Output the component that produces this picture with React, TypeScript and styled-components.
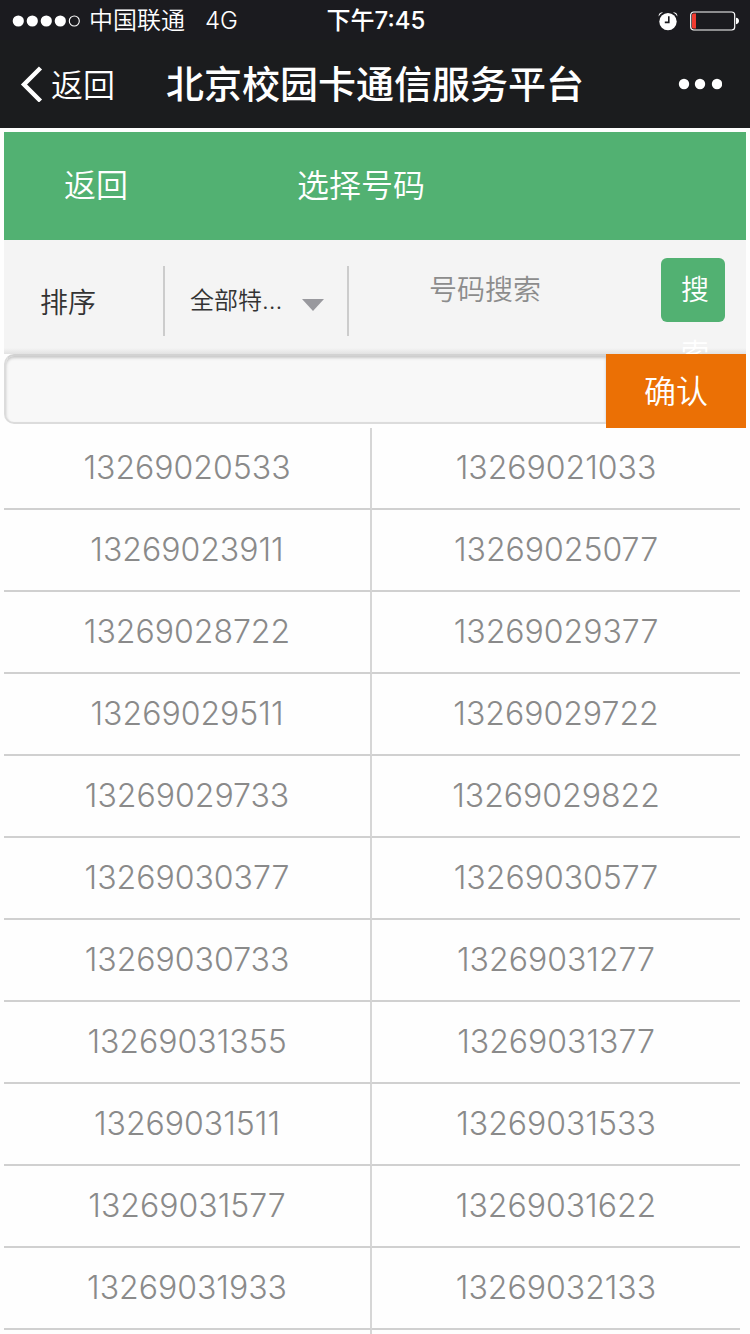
import React from "react";
import styled, { createGlobalStyle } from "styled-components";

const GlobalStyle = createGlobalStyle`
  * { box-sizing: border-box; }
  body {
    margin: 0;
    background: #fefefe;
    font-family: Inter, "Noto Sans CJK SC", sans-serif;
    font-weight: 350;
  }
  button, input, select { font: inherit; border: 0; margin: 0; padding: 0; }
`;

const Screen = styled.div`
  display: flex;
  flex-direction: column;
  min-height: 100vh;
`;

const StatusBar = styled.div`
  display: grid;
  grid-template-columns: 1fr auto 1fr;
  align-items: center;
  height: 40px;
  padding: 2px 10px 0 12px;
  background: #1b1b1f;
  color: #fff;
  font-size: 24px;
  line-height: 38px;
`;

const StatusGroup = styled.div<{ $end?: boolean }>`
  display: flex;
  align-items: center;
  justify-content: ${(p) => (p.$end ? "flex-end" : "flex-start")};
  gap: ${(p) => (p.$end ? "12px" : "8px")};
`;

const Network = styled.span`
  margin-left: 12px;
`;

const Clock = styled.time`
  font-weight: 500;
`;

const NavBar = styled.header`
  display: flex;
  align-items: center;
  height: 88px;
  padding: 0 28px 0 20px;
  background: #1b1c1e;
  color: #fff;
`;

const NavBack = styled.button`
  display: flex;
  align-items: center;
  gap: 8px;
  width: 146px;
  background: none;
  color: #fff;
  font-size: 32px;
  line-height: 48px;
`;

const NavLabel = styled.span`
  padding-top: 4px;
`;

const NavTitle = styled.h1`
  flex: 1;
  margin: 0;
  font-size: 38px;
  font-weight: 500;
  line-height: 56px;
  white-space: nowrap;
`;

const MoreButton = styled.button`
  display: flex;
  background: none;
`;

const Page = styled.main`
  flex: 1;
  display: flex;
  flex-direction: column;
  padding: 4px 4px 0;
`;

const PageHeader = styled.div`
  display: grid;
  grid-template-columns: 1fr auto 1fr;
  align-items: center;
  height: 108px;
  padding: 0 60px;
  background: #52b172;
  color: #fff;
  font-size: 32px;
  line-height: 48px;
`;

const BackLink = styled.a`
  color: inherit;
  text-decoration: none;
`;

const PageTitle = styled.h2`
  margin: 0 28px 0 0;
  font-size: inherit;
  font-weight: inherit;
`;

const FilterBar = styled.form`
  display: flex;
  align-items: flex-start;
  height: 114px;
  padding: 18px 21px 0 0;
  background: linear-gradient(#f4f4f4 108px, #e2e2e2);
  color: #333;
`;

const SortButton = styled.button`
  width: 161px;
  height: 70px;
  margin-top: 8px;
  padding-left: 36px;
  border-right: 2px solid #ccc;
  background: none;
  color: #333;
  font-size: 28px;
  text-align: left;
`;

const SelectBox = styled.div`
  display: flex;
  align-items: center;
  width: 184px;
  height: 70px;
  margin-top: 8px;
  padding: 0 23px 0 25px;
  border-right: 2px solid #ccc;
`;

const FeatureSelect = styled.select`
  appearance: none;
  flex: 1;
  min-width: 0;
  background: none;
  color: #333;
  font-size: 24px;
  line-height: 40px;
`;

const SearchInput = styled.input`
  flex: 1;
  min-width: 0;
  height: 64px;
  margin: 0 40px 0 0;
  background: none;
  font-size: 28px;
  text-align: center;
  &::placeholder { color: #8c8c8c; opacity: 1; }
`;

const SearchButton = styled.button`
  display: flex;
  align-items: flex-start;
  width: 64px;
  height: 64px;
  padding: 0 16px 0 20px;
  border-radius: 6px;
  background: #52b172;
  color: #fff;
  font-size: 28px;
  line-height: 64px;
  word-break: break-all;
`;

const ConfirmRow = styled.form`
  position: relative;
  display: flex;
  height: 74px;
`;

const NumberInput = styled.input`
  flex: 1;
  min-width: 0;
  height: 70px;
  padding: 0 16px;
  border: 2px solid #dcdcdc;
  border-top-color: #d2d2d2;
  border-right: 0;
  border-radius: 10px 0 0 10px;
  background: #f8f8f8;
  box-shadow: inset 0 2px 3px #c8c8c8;
  font-size: 32px;
`;

const ConfirmButton = styled.button`
  width: 140px;
  padding-bottom: 4px;
  background: #eb7005;
  color: #fff;
  font-size: 32px;
`;

const NumberTable = styled.table`
  table-layout: fixed;
  width: calc(100% - 6px);
  border-collapse: separate;
  border-spacing: 0;
`;

const NumberCell = styled.td`
  height: 82px;
  padding: 0;
  border-bottom: 2px solid #d0d0d0;
  color: #8a8a8a;
  font-size: 32px;
  font-weight: 300;
  line-height: 48px;
  text-align: center;
  &:first-child { border-right: 2px solid #d6d6d6; }
`;

const ListTail = styled.div`
  flex: 1;
  width: calc(50% - 3px);
  border-right: 2px solid #d6d6d6;
`;

const numbers: [string, string][] = [
  ["13269020533", "13269021033"],
  ["13269023911", "13269025077"],
  ["13269028722", "13269029377"],
  ["13269029511", "13269029722"],
  ["13269029733", "13269029822"],
  ["13269030377", "13269030577"],
  ["13269030733", "13269031277"],
  ["13269031355", "13269031377"],
  ["13269031511", "13269031533"],
  ["13269031577", "13269031622"],
  ["13269031933", "13269032133"],
];

const SignalDots = () => (
  <svg width="69" height="12" viewBox="0 0 69 12" fill="#fff" aria-hidden="true">
    <circle cx="6.3" cy="6" r="5.6" />
    <circle cx="20.3" cy="6" r="5.6" />
    <circle cx="34.3" cy="6" r="5.6" />
    <circle cx="48.3" cy="6" r="5.6" />
    <circle cx="62.3" cy="6" r="5" fill="none" stroke="#fff" strokeWidth="1.1" />
  </svg>
);

const AlarmIcon = () => (
  <svg width="20" height="20" viewBox="0 0 20 20" aria-hidden="true">
    <circle cx="10" cy="10.6" r="8.7" fill="#fff" />
    <path d="M0.6 5.6Q0.4 1.2 5.2 1.2Q2.2 2.6 0.6 5.6ZM14.8 1.2Q19.6 1.2 19.4 5.6Q17.8 2.6 14.8 1.2Z" fill="#fff" />
    <path d="M10.8 5.2V11.4H6.8" fill="none" stroke="#1b1b1f" strokeWidth="1.6" />
  </svg>
);

const BatteryIcon = () => (
  <svg width="50" height="20" viewBox="0 0 50 20" aria-hidden="true">
    <rect x="0.7" y="1" width="44" height="18" rx="3" fill="none" stroke="#fff" strokeWidth="1.2" />
    <path d="M3.4 2.5H6V17.5H3.4Q2 17.5 2 16V4Q2 2.5 3.4 2.5Z" fill="#f03b30" />
    <path d="M46 6.8C50 7 50 13 46 13.2Z" fill="#fff" />
  </svg>
);

const Chevron = () => (
  <svg width="23" height="36" viewBox="0 0 23 36" fill="none" stroke="#fff" strokeWidth="4.4" aria-hidden="true">
    <path d="M20.5 2L4 18.5L20.5 35" />
  </svg>
);

const MoreDots = () => (
  <svg width="44" height="12" viewBox="0 0 44 12" fill="#fff" aria-hidden="true">
    <circle cx="6" cy="6" r="5.2" />
    <circle cx="22" cy="6" r="5.2" />
    <circle cx="39" cy="6" r="5.2" />
  </svg>
);

const SelectArrow = () => (
  <svg width="22" height="20" viewBox="0 0 22 20" aria-hidden="true">
    <path d="M0 8H22L11 20Z" fill="#99999e" />
  </svg>
);

export default function App() {
  return (
    <Screen>
      <GlobalStyle />
      <StatusBar>
        <StatusGroup>
          <SignalDots />
          <span>中国联通</span>
          <Network>4G</Network>
        </StatusGroup>
        <Clock>下午7:45</Clock>
        <StatusGroup $end>
          <AlarmIcon />
          <BatteryIcon />
        </StatusGroup>
      </StatusBar>
      <NavBar>
        <NavBack type="button">
          <Chevron />
          <NavLabel>返回</NavLabel>
        </NavBack>
        <NavTitle>北京校园卡通信服务平台</NavTitle>
        <MoreButton type="button" aria-label="更多">
          <MoreDots />
        </MoreButton>
      </NavBar>
      <Page>
        <PageHeader>
          <BackLink href="#back">返回</BackLink>
          <PageTitle>选择号码</PageTitle>
        </PageHeader>
        <FilterBar onSubmit={(e) => e.preventDefault()}>
          <SortButton type="button">排序</SortButton>
          <SelectBox>
            <FeatureSelect aria-label="号码特征">
              <option>全部特…</option>
            </FeatureSelect>
            <SelectArrow />
          </SelectBox>
          <SearchInput type="text" placeholder="号码搜索" aria-label="号码搜索" />
          <SearchButton type="submit">搜索</SearchButton>
        </FilterBar>
        <ConfirmRow onSubmit={(e) => e.preventDefault()}>
          <NumberInput type="text" aria-label="已选号码" />
          <ConfirmButton type="submit">确认</ConfirmButton>
        </ConfirmRow>
        <NumberTable>
          <tbody>
            {numbers.map(([left, right]) => (
              <tr key={left}>
                <NumberCell>{left}</NumberCell>
                <NumberCell>{right}</NumberCell>
              </tr>
            ))}
          </tbody>
        </NumberTable>
        <ListTail />
      </Page>
    </Screen>
  );
}
